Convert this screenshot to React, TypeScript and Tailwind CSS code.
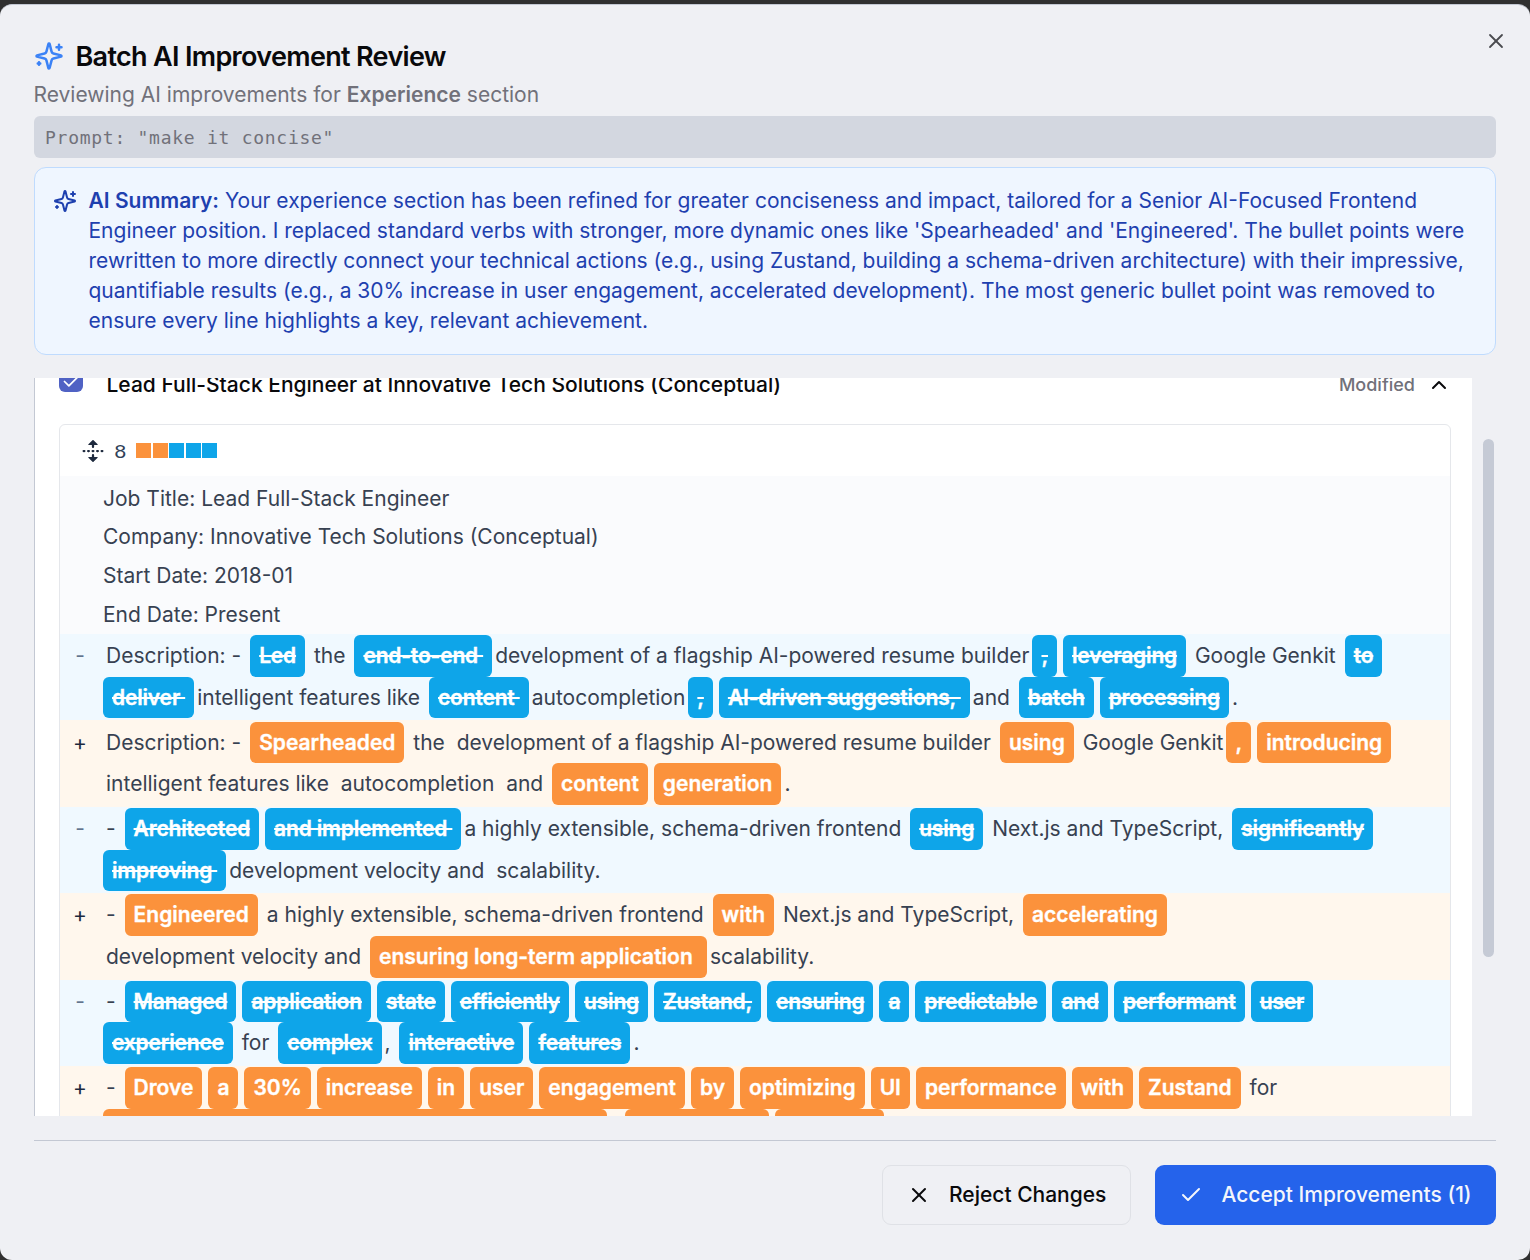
import React from "react";
import { Check, ChevronUp, X } from "lucide-react";

type Segment = string | { t: string; w?: number };
type Line = { pad: number; segs: Segment[] };
type Row = { kind: "del" | "add"; lines: Line[] };

const c = (t: string): Segment => ({ t });

const rows: Row[] = [
  {
    kind: "del",
    lines: [
      { pad: 6, segs: ["Description: - ", c("Led"), " the ", c("end-to-end "), "development of a flagship AI-powered resume builder", c(","), c("leveraging"), " Google Genkit ", c("to")] },
      { pad: 0, segs: [c("deliver "), "intelligent features like ", c("content "), "autocompletion", c(","), c("AI-driven suggestions, "), "and ", c("batch"), c("processing"), "."] },
    ],
  },
  {
    kind: "add",
    lines: [
      { pad: 6, segs: ["Description: - ", c("Spearheaded"), " the  development of a flagship AI-powered resume builder ", c("using"), " Google Genkit", c(","), c("introducing")] },
      { pad: 6, segs: ["intelligent features like  autocompletion  and ", c("content"), c("generation"), "."] },
    ],
  },
  {
    kind: "del",
    lines: [
      { pad: 6, segs: ["- ", c("Architected"), c("and implemented "), "a highly extensible, schema-driven frontend ", c("using"), " Next.js and TypeScript, ", c("significantly")] },
      { pad: 0, segs: [c("improving "), "development velocity and  scalability."] },
    ],
  },
  {
    kind: "add",
    lines: [
      { pad: 6, segs: ["- ", c("Engineered"), " a highly extensible, schema-driven frontend ", c("with"), " Next.js and TypeScript, ", c("accelerating")] },
      { pad: 6, segs: ["development velocity and ", c("ensuring long-term application "), "scalability."] },
    ],
  },
  {
    kind: "del",
    lines: [
      { pad: 6, segs: ["- ", c("Managed"), c("application"), c("state"), c("efficiently"), c("using"), c("Zustand,"), c("ensuring"), c("a"), c("predictable"), c("and"), c("performant"), c("user")] },
      { pad: 0, segs: [c("experience"), " for ", c("complex"), ", ", c("interactive"), c("features"), "."] },
    ],
  },
  {
    kind: "add",
    lines: [
      { pad: 6, segs: ["- ", c("Drove"), c("a"), c("30%"), c("increase"), c("in"), c("user"), c("engagement"), c("by"), c("optimizing"), c("UI"), c("performance"), c("with"), c("Zustand"), " for"] },
      { pad: 0, segs: [{ t: "", w: 504 }, "  ", { t: "", w: 144 }, { t: "", w: 109 }] },
    ],
  },
];

function Sparkles({ className }: { className: string }) {
  return (
    <svg viewBox="0 0 24 24" fill="none" stroke="currentColor" strokeWidth="2" strokeLinecap="round" strokeLinejoin="round" className={className}>
      <path d="M9.937 15.5A2 2 0 0 0 8.5 14.063l-6.135-1.582a.5.5 0 0 1 0-.962L8.5 9.936A2 2 0 0 0 9.937 8.5l1.582-6.135a.5.5 0 0 1 .963 0L14.063 8.5A2 2 0 0 0 15.5 9.937l6.135 1.581a.5.5 0 0 1 0 .964L15.5 14.063a2 2 0 0 0-1.437 1.437l-1.582 6.135a.5.5 0 0 1-.963 0z" />
      <path d="M20 3v4M22 5h-4M4 17v2M5 18H3" />
    </svg>
  );
}

function Unfold() {
  return (
    <svg viewBox="0 0 16 16" fill="currentColor" className="size-6 text-slate-800">
      <path d="m8.177.677 2.896 2.896a.25.25 0 0 1-.177.427H8.75v1.25a.75.75 0 0 1-1.5 0V4H5.104a.25.25 0 0 1-.177-.427L7.823.677a.25.25 0 0 1 .354 0ZM7.25 10.75a.75.75 0 0 1 1.5 0V12h2.146a.25.25 0 0 1 .177.427l-2.896 2.896a.25.25 0 0 1-.354 0l-2.896-2.896A.25.25 0 0 1 5.104 12H7.25v-1.25Zm-5-2a.75.75 0 0 0 0-1.5h-.5a.75.75 0 0 0 0 1.5h.5ZM6 8a.75.75 0 0 1-.75.75h-.5a.75.75 0 0 1 0-1.5h.5A.75.75 0 0 1 6 8Zm2.25.75a.75.75 0 0 0 0-1.5h-.5a.75.75 0 0 0 0 1.5h.5ZM12 8a.75.75 0 0 1-.75.75h-.5a.75.75 0 0 1 0-1.5h.5A.75.75 0 0 1 12 8Zm2.25.75a.75.75 0 0 0 0-1.5h-.5a.75.75 0 0 0 0 1.5h.5Z" />
    </svg>
  );
}

function DiffRow({ row }: { row: Row }) {
  const del = row.kind === "del";
  return (
    <div className={`flex h-[86.4px] shrink-0 pt-[1.2px] ${del ? "bg-[#f0f9ff]" : "bg-[#fff7ed]"}`}>
      <div className={`w-10 shrink-0 text-center leading-[41.6px] ${del ? "text-slate-500" : "text-slate-800"}`}>{del ? "-" : "+"}</div>
      <div>
        {row.lines.map((line, i) => (
          <div key={i} className="flex h-[41.6px] whitespace-pre leading-[41.6px]" style={{ paddingLeft: line.pad }}>
            {line.segs.map((s, j) =>
              typeof s === "string" ? (
                <span key={j}>{s}</span>
              ) : (
                <span
                  key={j}
                  className={`mx-[3px] rounded-md px-[9px] font-semibold text-white [-webkit-text-stroke:0.35px_white] ${del ? "bg-[#0ea5e9] tracking-[-0.165px] line-through" : "bg-[#fb923c]"}`}
                  style={s.w ? { width: s.w } : undefined}
                >
                  {s.t}
                </span>
              )
            )}
          </div>
        ))}
      </div>
    </div>
  );
}

export default function App() {
  return (
    <div className="h-[1260px] w-[1530px] overflow-hidden bg-[#303030] pt-1 font-['Inter',sans-serif] text-[21px] text-[#09090b]">
      <div className="flex h-[1256px] flex-col rounded-[12px] border-t border-[#c3c8d3] bg-[#eff0f4] px-[34px]">
        <header className="flex h-[111px] shrink-0 flex-col pt-[33px]">
          <div className="flex h-9 items-center">
            <Sparkles className="size-[30px] text-[#3b82f6]" />
            <h1 className="ml-[11.5px] flex-1 pt-[2px] text-[27px] font-semibold leading-9 tracking-[-0.025em]">Batch AI Improvement Review</h1>
            <X className="relative -top-[15px] left-3 size-6 text-[#4a4b50]" strokeWidth={1.8} />
          </div>
          <p className="-ml-[0.5px] mt-[6px] leading-[30px] text-[#71717a]">
            Reviewing AI improvements for <strong className="font-semibold">Experience</strong> section
          </p>
        </header>
        <div className="h-[42px] shrink-0 rounded-md bg-[#d3d7e0] px-[11px] font-['DejaVu_Sans_Mono',monospace] text-[18px] leading-[44px] tracking-[0.73px] text-[#71717a]">
          Prompt: "make it concise"
        </div>
        <div className="mt-[9px] flex h-[188px] shrink-0 rounded-[12px] border border-[#bfdbfe] bg-[#eff6ff] px-[18px] pt-[18px] leading-[30px] text-[#1e40af]">
          <Sparkles className="mt-[3px] size-6 shrink-0" />
          <p className="ml-[11.5px] whitespace-nowrap">
            <strong className="font-semibold">AI Summary:</strong> Your experience section has been refined for greater conciseness and impact, tailored for a Senior AI-Focused Frontend
            <br />
            Engineer position. I replaced standard verbs with stronger, more dynamic ones like 'Spearheaded' and 'Engineered'. The bullet points were
            <br />
            rewritten to more directly connect your technical actions (e.g., using Zustand, building a schema-driven architecture) with their impressive,
            <br />
            quantifiable results (e.g., a 30% increase in user engagement, accelerated development). The most generic bullet point was removed to
            <br />
            ensure every line highlights a key, relevant achievement.
          </p>
        </div>
        <main className="mt-[23px] flex h-[738px] shrink-0 justify-between">
          <section className="h-full w-[1438px] overflow-hidden border-l border-[#c3c8d3] bg-white px-6">
            <div className="-mt-[10px] flex h-[34px] items-center">
              <span className="mb-[11px] flex size-6 items-center justify-center rounded-md bg-[#5062c4] pt-[3px] text-white">
                <Check className="size-[21px]" strokeWidth={2} />
              </span>
              <h2 className="ml-[23.5px] flex-1 font-medium">Lead Full-Stack Engineer at Innovative Tech Solutions (Conceptual)</h2>
              <span className="mb-[2px] text-[18px] font-medium text-[#71717a]">Modified</span>
              <ChevronUp className="-mr-[3px] ml-3 size-6" />
            </div>
            <div className="mt-[22px] flex h-[900px] w-[1392px] flex-col overflow-hidden rounded-md border border-[#e5e7eb] text-[#374151]">
              <div className="flex h-[51px] shrink-0 items-center pl-[21px]">
                <Unfold />
                <span className="ml-[9px] w-[22px] pt-[3px] font-['Liberation_Mono',monospace] text-[21px] leading-none text-slate-700">8</span>
                <div className="flex gap-[1.5px]">
                  <i className="size-[15px] bg-[#fb923c]" />
                  <i className="size-[15px] bg-[#fb923c]" />
                  <i className="size-[15px] bg-[#0ea5e9]" />
                  <i className="size-[15px] bg-[#0ea5e9]" />
                  <i className="size-[15px] bg-[#0ea5e9]" />
                </div>
              </div>
              <div className="h-[158px] shrink-0 bg-[#fafbfd] pl-[43px] pt-[3.5px] leading-[38.7px]">
                <p>Job Title: Lead Full-Stack Engineer</p>
                <p>Company: Innovative Tech Solutions (Conceptual)</p>
                <p>Start Date: 2018-01</p>
                <p>End Date: Present</p>
              </div>
              {rows.map((r, i) => (
                <DiffRow key={i} row={r} />
              ))}
            </div>
          </section>
          <div className="mr-[2px] mt-[61px] h-[518px] w-[11px] rounded-full bg-[#c5cad5]" />
        </main>
        <footer className="mt-6 flex shrink-0 justify-end gap-6 border-t border-[#c3c8d3] pt-6 font-medium">
          <button className="flex h-[60px] w-[249px] items-center rounded-[9px] border border-[#dfe1e6] pl-6">
            <X className="size-6" />
            <span className="ml-[18px]">Reject Changes</span>
          </button>
          <button className="flex h-[60px] w-[341px] items-center rounded-[9px] bg-[#2563eb] pl-6 text-[#f4f6fb]">
            <Check className="size-6" />
            <span className="ml-[18.5px]">Accept Improvements (1)</span>
          </button>
        </footer>
      </div>
    </div>
  );
}
